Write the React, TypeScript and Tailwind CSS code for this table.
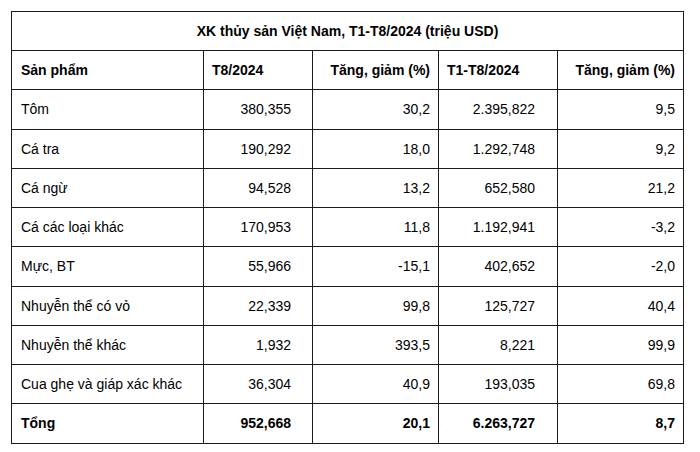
import React from "react";

type Row = [string, string, string, string, string];

const rows: Row[] = [
  ["Tôm", "380,355", "30,2", "2.395,822", "9,5"],
  ["Cá tra", "190,292", "18,0", "1.292,748", "9,2"],
  ["Cá ngừ", "94,528", "13,2", "652,580", "21,2"],
  ["Cá các loại khác", "170,953", "11,8", "1.192,941", "-3,2"],
  ["Mực, BT", "55,966", "-15,1", "402,652", "-2,0"],
  ["Nhuyễn thể có vỏ", "22,339", "99,8", "125,727", "40,4"],
  ["Nhuyễn thể khác", "1,932", "393,5", "8,221", "99,9"],
  ["Cua ghẹ và giáp xác khác", "36,304", "40,9", "193,035", "69,8"],
];

const heights = ["h-[40px]", "h-[39px]", "h-[39px]", "h-[39px]", "h-[40px]", "h-[39px]", "h-[39px]", "h-[39px]"];

const grid = "grid grid-cols-[192px_109px_126px_119px_125px] border-b border-[#1a1a1a]";
const cell = "flex items-center border-r border-[#1a1a1a]";

export default function App() {
  return (
    <div className="w-[700px] h-[452px] bg-white pt-[11px] pl-[11px] text-[14px] text-black" style={{ fontFamily: '"Liberation Sans", Arial, sans-serif' }}>
      <div className="w-[673px] border border-[#1a1a1a]">
        <div className="h-[39px] flex items-center justify-center font-bold border-b border-[#1a1a1a]">
          XK thủy sản Việt Nam, T1-T8/2024 (triệu USD)
        </div>
        <div className={`${grid} h-[39px] font-bold`}>
          <div className={`${cell} pl-[9px]`}>Sản phẩm</div>
          <div className={`${cell} pl-[8px]`}>T8/2024</div>
          <div className={`${cell} justify-end pr-[8px]`}>Tăng, giảm (%)</div>
          <div className={`${cell} pl-[8px]`}>T1-T8/2024</div>
          <div className="flex items-center justify-end pr-[8px]">Tăng, giảm (%)</div>
        </div>
        {rows.map((r, i) => (
          <div key={i} className={`${grid} ${heights[i]}`}>
            <div className={`${cell} pl-[9px]`}>{r[0]}</div>
            <div className={`${cell} justify-end pr-[21px]`}>{r[1]}</div>
            <div className={`${cell} justify-end pr-[8px]`}>{r[2]}</div>
            <div className={`${cell} justify-end pr-[22px]`}>{r[3]}</div>
            <div className="flex items-center justify-end pr-[8px]">{r[4]}</div>
          </div>
        ))}
        <div className="grid grid-cols-[192px_109px_126px_119px_125px] h-[39px] font-bold">
          <div className={`${cell} pl-[9px]`}>Tổng</div>
          <div className={`${cell} justify-end pr-[21px]`}>952,668</div>
          <div className={`${cell} justify-end pr-[8px]`}>20,1</div>
          <div className={`${cell} justify-end pr-[22px]`}>6.263,727</div>
          <div className="flex items-center justify-end pr-[8px]">8,7</div>
        </div>
      </div>
    </div>
  );
}
